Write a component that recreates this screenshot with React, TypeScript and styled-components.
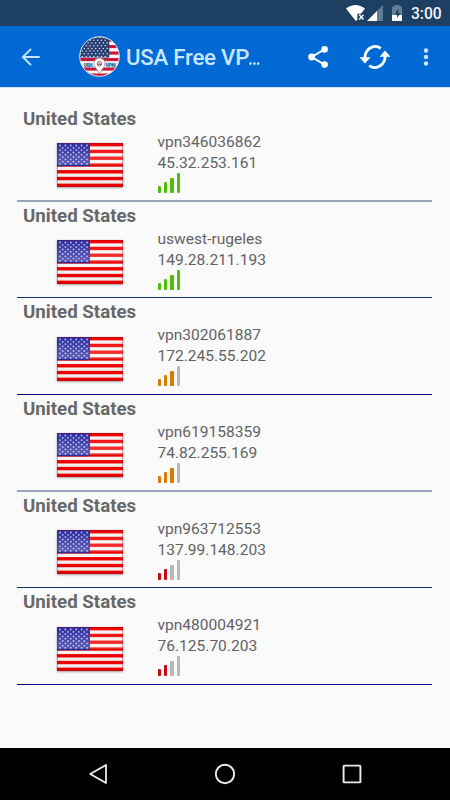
import React from 'react';
import styled, { createGlobalStyle } from 'styled-components';

const GlobalStyle = createGlobalStyle`
  body { margin: 0; background: #fafafa; font-family: Roboto, "Liberation Sans", sans-serif; }
  * { box-sizing: border-box; }
  svg { display: block; flex: none; }
`;

const Screen = styled.div`
  width: 450px;
  height: 800px;
  display: flex;
  flex-direction: column;
  background: #fafafa;
  overflow: hidden;
`;

const StatusBar = styled.header`
  height: 26px;
  flex: none;
  background: #1d3f61;
  display: flex;
  align-items: center;
  justify-content: flex-end;
  padding-right: 9px;
`;

const Clock = styled.span`
  width: 30px;
  margin-left: 8px;
  color: #f2f5f8;
  font-size: 15.6px;
  font-weight: 500;
  line-height: 26px;
  white-space: nowrap;
  padding-top: 2px;
`;

const AppBar = styled.div`
  height: 62px;
  flex: none;
  background: #0069d4;
  border-bottom: 1px solid #d3e3f5;
  display: flex;
  align-items: center;
`;

const IconButton = styled.button<{ $left: number }>`
  border: 0;
  padding: 0;
  margin: 0 0 0 ${(p) => p.$left}px;
  background: none;
`;

const Logo = styled.div`
  margin-left: 38px;
`;

const AppTitle = styled.h1`
  margin: 0 0 0 6px;
  padding-top: 1px;
  width: 138px;
  flex: none;
  color: #c9e6ff;
  font-size: 22.2px;
  font-weight: 500;
  letter-spacing: -0.22px;
  line-height: 30px;
  white-space: nowrap;
`;

const Ellipsis = styled.span`
  display: inline-block;
  transform: scaleX(0.8);
  transform-origin: left;
  margin-left: -1px;
`;

const ServerList = styled.main`
  flex: 1;
  padding: 17px 17px 0 17px;
`;

const Row = styled.section<{ $height: number; $line: number; $color: string }>`
  height: ${(p) => p.$height}px;
  border-bottom: ${(p) => p.$line}px solid ${(p) => p.$color};
  margin-right: 1px;
`;

const Country = styled.h2`
  margin: 0;
  padding: 1px 0 0 6px;
  height: 27px;
  line-height: 27px;
  font-size: 18.7px;
  font-weight: 700;
  color: #686868;
`;

const Server = styled.div`
  display: flex;
  padding-left: 37px;
`;

const FlagBox = styled.div<{ $top: number }>`
  margin-top: ${(p) => p.$top}px;
  width: 72px;
`;

const Details = styled.div`
  margin-left: 31.5px;
  color: #636363;
  font-size: 15.55px;
  line-height: 21px;
`;

const Signal = styled.div`
  display: flex;
  align-items: flex-end;
  gap: 3.1px;
  height: 20px;
  margin-top: -1.5px;
`;

const Bar = styled.i<{ $height: number; $color: string }>`
  width: 3.3px;
  height: ${(p) => p.$height}px;
  background: ${(p) => p.$color};
  border-radius: 1px;
`;

const NavBar = styled.nav`
  height: 52px;
  flex: none;
  background: #000;
  display: flex;
  align-items: center;
  justify-content: space-between;
  padding: 0 88px;
`;

const canton = Array.from({ length: 9 }, (_, r) =>
  Array.from({ length: r % 2 ? 5 : 6 }, (_, c) => ({ x: 3 + c * 5.4 + (r % 2 ? 2.7 : 0), y: 2.5 + r * 2.3 }))
).flat();

function Flag() {
  return (
    <svg width="72" height="50" viewBox="-3 -2 72 50">
      <defs>
        <linearGradient id="gloss" x2="0" y2="1">
          <stop offset="0" stopColor="#fff" stopOpacity="0" />
          <stop offset=".48" stopColor="#fff" stopOpacity=".24" />
          <stop offset=".52" stopColor="#000" stopOpacity="0" />
          <stop offset="1" stopColor="#000" stopOpacity=".04" />
        </linearGradient>
        <filter id="shade" x="-10%" y="-10%" width="120%" height="125%">
          <feDropShadow dx="0" dy=".8" stdDeviation=".8" floodOpacity=".4" />
        </filter>
      </defs>
      <rect width="66" height="44" fill="#f5f2f2" filter="url(#shade)" />
      {Array.from({ length: 7 }, (_, i) => (
        <rect key={i} y={i * 6.77} width="66" height="3.38" fill="#f00000" />
      ))}
      <rect width="33" height="23.2" fill="#2c2ca0" />
      {canton.map((s, i) => (
        <circle key={i} cx={s.x} cy={s.y} r=".9" fill="#bbbdf0" />
      ))}
      <rect width="66" height="44" fill="url(#gloss)" />
      <rect x=".5" y=".5" width="65" height="43" fill="none" stroke="#881018" strokeOpacity=".32" />
    </svg>
  );
}

const logoStars = Array.from({ length: 8 }, (_, r) =>
  Array.from({ length: 8 }, (_, c) => ({ x: 1.5 + c * 3.8 + (r % 2 ? 1.9 : 0), y: 1.6 + r * 2.7 }))
).flat();

function LogoMark() {
  return (
    <svg width="41" height="41" viewBox="0 0 41 41">
      <clipPath id="disc"><circle cx="20.5" cy="20.5" r="19.8" /></clipPath>
      <g clipPath="url(#disc)">
        <rect width="41" height="41" fill="#f7f4f6" />
        {[2.5, 9, 15.5, 22, 31.5, 37.5].map((y) => (
          <rect key={y} y={y} width="41" height="3.1" fill="#cb1738" />
        ))}
        <rect width="30.3" height="21.5" fill="#293f73" />
        {logoStars.map((s, i) => s.x < 29.5 && s.y < 21 && (
          <circle key={i} cx={s.x} cy={s.y} r=".75" fill="#dfe6f0" />
        ))}
        <g fontFamily="Roboto, sans-serif" fontWeight="900" fontSize="5.4" fill="#16365f" stroke="#53b8de" strokeWidth=".3">
          <text x="5" y="30.5" textLength="9">USA</text>
          <text x="26.5" y="30.5" textLength="10">VPN</text>
        </g>
      </g>
      <path d="M20.5 37.5C18.5 33.5 15 31 15 27.4a5.5 5.5 0 0 1 11 0c0 3.6-3.5 6.1-5.5 10.1Z" fill="#fff" stroke="#77727a" strokeWidth=".6" />
      <circle cx="20.5" cy="27.7" r="2.3" fill="#eadde0" stroke="#6b414c" strokeWidth=".7" />
      <path d="M18.6 28.2h3.8" stroke="#cb1738" />
      <circle cx="20.5" cy="20.5" r="19.8" fill="none" stroke="#d9e5f0" strokeWidth="1" />
    </svg>
  );
}

function StatusIcons() {
  return (
    <svg width="58" height="26" viewBox="346 0 58 26">
      <path d="M347 8.5c6-4.7 13-4.7 19 0l-4 5.2h-3.6V20l-1.6 1Z" fill="#fff" />
      <path d="m360.2 14.8 4.3 4.6m0-4.6-4.3 4.6" stroke="#fff" strokeWidth="1.4" />
      <path d="M384 5v16h-16Z" fill="#637d94" />
      <path d="M378 11v10h-10Z" fill="#fff" />
      <path d="M393 6.5h2.5V5h5v1.5h2.5V21h-10Z" fill="#637d94" />
      <path d="M393 15h10v6h-10Z" fill="#fff" />
      <path d="m399.5 8.5-4 6h2.5V18l3.4-5h-2.2Z" fill="#1d3f61" />
    </svg>
  );
}

const tones = { good: '#4fbe08', fair: '#d97900', poor: '#cc0710', off: '#b7b7b7' };
const barHeights = [6.3, 10.3, 14.8, 19.3];

type Tone = 'good' | 'fair' | 'poor';
const servers: { name: string; ip: string; tone: Tone; level: number; height: number; flagTop: number; line: number; color: string }[] = [
  { name: 'vpn346036862', ip: '45.32.253.161', tone: 'good', level: 4, height: 97, flagTop: 9, line: 2, color: '#9aa6bd' },
  { name: 'uswest-rugeles', ip: '149.28.211.193', tone: 'good', level: 4, height: 96, flagTop: 9, line: 1, color: '#083c70' },
  { name: 'vpn302061887', ip: '172.245.55.202', tone: 'fair', level: 3, height: 97, flagTop: 10, line: 1, color: '#000080' },
  { name: 'vpn619158359', ip: '74.82.255.169', tone: 'fair', level: 3, height: 97, flagTop: 9, line: 2, color: '#9aa6bd' },
  { name: 'vpn963712553', ip: '137.99.148.203', tone: 'poor', level: 2, height: 96, flagTop: 9, line: 1, color: '#083c70' },
  { name: 'vpn480004921', ip: '76.125.70.203', tone: 'poor', level: 2, height: 97, flagTop: 10, line: 1, color: '#000080' },
];

export default function App() {
  return (
    <Screen>
      <GlobalStyle />
      <StatusBar>
        <StatusIcons />
        <Clock>3:00</Clock>
      </StatusBar>
      <AppBar>
        <IconButton $left={21} aria-label="Back">
          <svg width="20" height="20" viewBox="0 0 20 20" fill="none" stroke="#c5e5ff" strokeWidth="1.9">
            <path d="M18.7 10H2.5M10 1.8 1.9 10l8.1 8.2" />
          </svg>
        </IconButton>
        <Logo><LogoMark /></Logo>
        <AppTitle>USA Free VP<Ellipsis>…</Ellipsis></AppTitle>
        <IconButton $left={43} aria-label="Share">
          <svg width="22" height="24" viewBox="0 0 22 24" fill="#fff">
            <path d="m17.6 4.4-13 7.6 13 7.6" fill="none" stroke="#fff" strokeWidth="2" />
            <circle cx="17.6" cy="4.4" r="3.3" /><circle cx="4.6" cy="12" r="3.4" /><circle cx="17.6" cy="19.6" r="3.3" />
          </svg>
        </IconButton>
        <IconButton $left={30} aria-label="Refresh">
          <svg width="32" height="26" viewBox="0 0 32 26">
            <g fill="none" stroke="#fff" strokeWidth="2.8">
              <path d="M6 15C5.1 5.8 14.4-.9 21.8 4.4" />
              <path d="M26 11c.9 9.2-8.4 15.9-15.8 10.6" />
            </g>
            <path d="M.5 13.2h11L6 19.5ZM31.5 12.8h-11L26 6.5Z" fill="#fff" />
          </svg>
        </IconButton>
        <IconButton $left={32} aria-label="More options">
          <svg width="6" height="20" viewBox="0 0 6 20" fill="#cbe7ff">
            <circle cx="3" cy="3.5" r="2.2" /><circle cx="3" cy="10" r="2.2" /><circle cx="3" cy="16.5" r="2.2" />
          </svg>
        </IconButton>
      </AppBar>
      <ServerList>
        {servers.map((s) => (
          <Row key={s.name} $height={s.height} $line={s.line} $color={s.color}>
            <Country>United States</Country>
            <Server>
              <FlagBox $top={s.flagTop}><Flag /></FlagBox>
              <Details>
                <div>{s.name}</div>
                <div>{s.ip}</div>
                <Signal>
                  {barHeights.map((h, i) => (
                    <Bar key={h} $height={h} $color={i < s.level ? tones[s.tone] : tones.off} />
                  ))}
                </Signal>
              </Details>
            </Server>
          </Row>
        ))}
      </ServerList>
      <NavBar>
        <svg width="20" height="22" viewBox="0 0 20 22"><path d="M18 2v18L2.2 11Z" fill="none" stroke="#eee" strokeWidth="1.8" strokeLinejoin="round" /></svg>
        <svg width="22" height="22" viewBox="0 0 22 22"><circle cx="11" cy="11" r="9.2" fill="none" stroke="#eee" strokeWidth="1.9" /></svg>
        <svg width="20" height="20" viewBox="0 0 20 20"><rect x="1.6" y="1.6" width="16.8" height="16.8" rx=".7" fill="none" stroke="#eee" strokeWidth="1.9" /></svg>
      </NavBar>
    </Screen>
  );
}
